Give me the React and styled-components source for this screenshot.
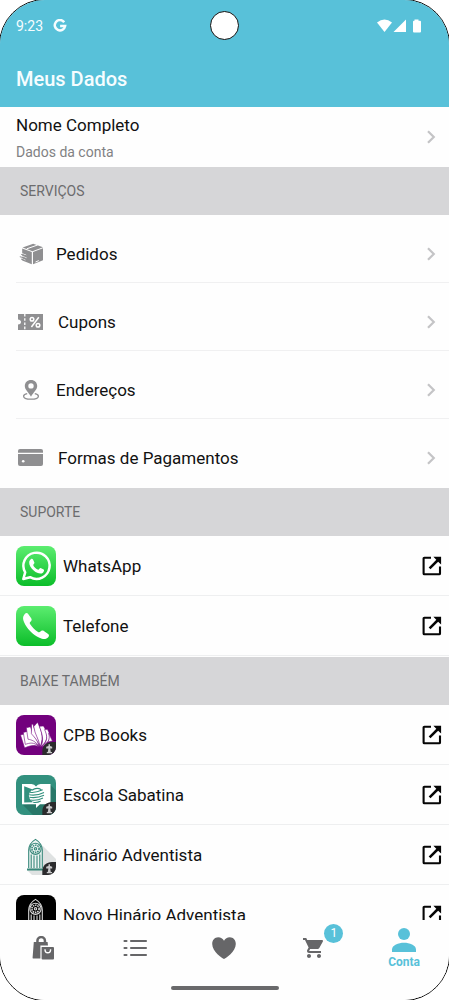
import React from "react";
import styled, { createGlobalStyle } from "styled-components";

const GlobalStyle = createGlobalStyle`
  * { box-sizing: border-box; }
  body {
    margin: 0;
    overflow: hidden;
    background: #fff;
    font-family: Roboto, "Noto Sans", sans-serif;
  }
  #root { display: flow-root; }
`;

const Phone = styled.div`
  display: flex;
  flex-direction: column;
  height: calc(100vh + 2px);
  margin: -1px;
  border: 1px solid #000;
  border-radius: 46px;
  overflow: hidden;
  background: #fefefe;
`;

const Header = styled.header`
  flex: none;
  background: #58c1d9;
  color: #f6fdff;
`;

const StatusBar = styled.div`
  display: grid;
  grid-template-columns: 1fr auto 1fr;
  align-items: center;
  height: 51px;
  padding: 0 28px 0 16px;
`;

const StatusLeft = styled.div`
  display: flex;
  align-items: center;
  gap: 10px;
  margin-right: -12px;
  font-size: 14px;
  line-height: 20px;
`;

const Camera = styled.div`
  width: 29px;
  height: 29px;
  margin-left: 12px;
  border: 1px solid #111;
  border-radius: 50%;
  background: #fff;
`;

const StatusRight = styled.div`
  display: flex;
  align-items: center;
  justify-content: flex-end;
`;

const Title = styled.h1`
  margin: 0;
  padding: 0 16px;
  font-size: 20px;
  font-weight: 500;
  line-height: 56px;
`;

const Content = styled.main`
  flex: 1;
  min-height: 0;
  overflow-y: auto;
  scrollbar-width: none;
`;

const SectionTitle = styled.h2`
  margin: 0;
  padding: 0 20px;
  background: #d6d6d8;
  color: #6c6c6e;
  font-size: 14px;
  font-weight: 400;
  line-height: 48px;
`;

const List = styled.ul`
  margin: 0;
  padding: 0 0 1px;
  list-style: none;
`;

const RowButton = styled.button`
  display: flex;
  align-items: center;
  width: 100%;
  height: ${(p) => (p.$tall ? 68 : 60)}px;
  padding: ${(p) => (p.$tall ? 9 : 0)}px 12px 0 16px;
  border: 0;
  background: none;
  color: #111;
  font: inherit;
  font-size: 17px;
  text-align: left;
  cursor: pointer;
`;

const ServiceItem = styled.li`
  position: relative;
  &:not(:last-child)::after {
    content: "";
    position: absolute;
    right: 0;
    bottom: 0;
    left: 16px;
    height: 1px;
    background: #f0f0f1;
  }
`;

const ServiceIcon = styled.span`
  display: flex;
  flex: none;
  width: ${(p) => p.$width}px;
  margin-right: 12px;
`;

const Label = styled.span`
  flex: 1;
`;

const AccountText = styled.span`
  display: flex;
  flex: 1;
  flex-direction: column;
  padding-top: 2px;
  line-height: 28px;
`;

const AccountHint = styled.small`
  color: #818183;
  font-size: 14px;
  line-height: 26px;
`;

const AppLink = styled.a`
  display: flex;
  align-items: center;
  gap: 7px;
  height: 60px;
  padding: 0 7px 0 16px;
  border-bottom: 1px solid #eeeff0;
  color: #111;
  font-size: 17px;
  text-decoration: none;
`;

const Footer = styled.footer`
  flex: none;
  height: 80px;
  background: #fefefe;
`;

const Tabs = styled.nav`
  display: grid;
  grid-template-columns: repeat(5, 1fr);
  height: 56px;
`;

const Tab = styled.button`
  display: flex;
  flex-direction: column;
  align-items: center;
  justify-content: center;
  gap: 2px;
  padding: ${(p) => (p.$active ? 2 : 0)}px 0 0;
  border: 0;
  background: none;
  color: ${(p) => (p.$active ? "#58c1d9" : "#666668")};
  font: inherit;
  font-size: 12px;
  font-weight: 700;
  line-height: 16px;
  cursor: pointer;
`;

const TabIcon = styled.span`
  position: relative;
  display: flex;
`;

const Badge = styled.span`
  position: absolute;
  top: -12px;
  right: -17px;
  width: 19px;
  height: 19px;
  border-radius: 50%;
  background: #58c1d9;
  color: #fff;
  font-size: 12px;
  font-weight: 400;
  line-height: 19px;
  text-align: center;
`;

const HomeBar = styled.div`
  width: 108px;
  height: 4px;
  margin: 10px auto 0;
  border-radius: 2px;
  background: #69696b;
`;

const Chevron = () => (
  <svg width="12" height="16" viewBox="0 0 12 16" fill="none" stroke="#c4c4c6" strokeWidth="2.2" aria-hidden="true">
    <path d="M3 2.2L8.8 8L3 13.8" />
  </svg>
);

const OpenIcon = () => (
  <svg width="20" height="20" viewBox="0 0 20 20" fill="none" stroke="#050505" strokeWidth="2.1" aria-hidden="true">
    <path d="M9 1.8H2.4Q1.6 1.8 1.6 2.6V17.4Q1.6 18.2 2.4 18.2H17.2Q18 18.2 18 17.4V10.5" />
    <path d="M7.6 12.4L17 3" strokeWidth="2.5" />
    <path d="M11.4 .8H19.1V8.6L16.7 6.2L13.8 3.3Z" fill="#050505" stroke="none" />
  </svg>
);

const BoxIcon = () => (
  <svg width="28" height="22" viewBox="0 0 28 22" fill="#8f8f91" aria-hidden="true">
    <path d="M6.6 4.4L17.2 .8L27 4.2L16.4 8.2Z" />
    <path d="M6.2 5.4L15.8 9V21.2L6.2 17.6Z" />
    <path d="M17 9L27 5.2V17.2L17 21.2Z" />
    <path d="M10.8 5.8L21.6 2M19.5 19L22.8 17.6" stroke="#fff" strokeWidth="1" />
    <path d="M5 10.2L10.2 12.1M5 12.8L10.6 14.9M5 15.4L9.4 17" stroke="#fff" strokeWidth=".8" />
    <path d="M5.2 11.4L10 12.7M3.8 13.7L10.4 15.5M5 16L8.8 17.4" stroke="#8f8f91" strokeWidth="1" />
  </svg>
);

const CouponIcon = () => (
  <svg width="30" height="18" viewBox="0 0 30 18" aria-hidden="true">
    <path fill="#8f8f91" d="M2 1H27V17H2V11.5Q5 11 5 9Q5 7 2 6.5Z" />
    <path d="M8.8 1V17" stroke="#fff" strokeWidth="1.3" strokeDasharray="2.6 1.6" />
    <g fill="none" stroke="#fff" strokeWidth="1.5">
      <circle cx="16" cy="6.2" r="1.8" />
      <circle cx="22" cy="12.2" r="1.8" />
      <path d="M22.8 4.2L15.4 14" />
    </g>
  </svg>
);

const PinIcon = () => (
  <svg width="28" height="22" viewBox="0 0 28 22" aria-hidden="true">
    <path fill="#8f8f91" fillRule="evenodd" d="M15 1C11.3 1 8.8 3.6 8.8 7C8.8 10.8 12.5 13.2 15 17.7C17.5 13.2 21.2 10.8 21.2 7C21.2 3.6 18.7 1 15 1ZM15 4.2A2.7 2.7 0 1 1 15 9.6A2.7 2.7 0 1 1 15 4.2Z" />
    <path d="M11.2 14.7C8.9 15.2 7.6 16 7.6 17.2C7.6 19 10.8 20.2 15 20.2S22.4 19 22.4 17.2C22.4 16 21.1 15.2 18.8 14.7" fill="none" stroke="#8f8f91" strokeWidth="1.3" />
  </svg>
);

const CardIcon = () => (
  <svg width="30" height="18" viewBox="0 0 30 18" fill="#8f8f91" aria-hidden="true">
    <path d="M4 0H25Q27 0 27 2V3.7H2V2Q2 0 4 0Z" />
    <path d="M2 5H27V15Q27 17 25 17H4Q2 17 2 15Z" />
    <circle cx="7.2" cy="12.3" r="1.3" fill="#fff" />
  </svg>
);

const Tile = ({ children, fill, id }) => (
  <svg width="40" height="40" viewBox="0 0 40 40" aria-hidden="true">
    <defs>
      <clipPath id={`${id}-clip`}><rect width="40" height="40" rx="8" /></clipPath>
      <linearGradient id={`${id}-green`} x1="0" y1="0" x2="0" y2="1">
        <stop stopColor="#5ced70" />
        <stop offset="1" stopColor="#0bbd29" />
      </linearGradient>
    </defs>
    <g clipPath={`url(#${id}-clip)`}>
      <rect width="40" height="40" fill={fill || `url(#${id}-green)`} />
      {children}
    </g>
  </svg>
);

const LeafMark = () => (
  <>
    <path fill="#2b2b2d" d="M26.3 40.5V36.5C26.3 30.5 30.5 27 36 27H40.5V31C40.5 37 36.5 40.5 31 40.5Z" />
    <path fill="#c9c9cb" d="M32.5 29.2H34V31L36.2 31.8V33.6H34.2L34.8 37H36V38.2H30.8V37H31.8L32.4 33.6H30.2V31.8L32.5 31Z" />
  </>
);

const WhatsAppTile = () => (
  <Tile id="whatsapp">
    <path fill="none" stroke="#fff" strokeWidth="2.5" strokeLinejoin="round" d="M7.3 33L9.2 26.4A13.1 13.1 0 1 1 14.1 31.2Z" />
    <path fill="#fff" d="M14.9 13.2C15.5 12.6 16.7 12.7 17 13.4L18.4 16.6C18.7 17.5 17.3 18.4 17.2 19C17.7 20.8 20.1 23.1 22.2 23.7C23 23.7 23.7 22 24.6 22L27.7 23.5C28.6 24 27.7 26.2 26.6 26.9C24.5 28.3 20.7 27 18 24.7C14.9 22.2 12.9 18.7 13.2 16C13.3 14.8 14 13.9 14.9 13.2Z" />
  </Tile>
);

const PhoneTile = () => (
  <Tile id="phone">
    <path fill="#fff" d="M8.4 8.4C9.7 6.9 11.1 6.5 12 7.7L15.2 12.2C16.3 13.8 15.4 15 14.2 16C13.5 16.7 13.7 17.5 14.4 18.5C16.3 21.3 18.8 23.8 21.7 25.7C22.7 26.4 23.5 26.5 24.2 25.8C25.3 24.6 26.4 24 27.9 25L32.1 28C33.5 29 33.2 30.3 31.7 31.7C29.6 33.6 27 33.5 23.4 31.8C16.7 28.6 11 22.8 8.1 16.2C6.7 13 6.6 10.5 8.4 8.4Z" />
  </Tile>
);

const BooksTile = () => (
  <Tile id="books" fill="#72007d">
    <g fill="#fff" stroke="#72007d" strokeWidth="0.6" strokeLinejoin="round">
      <path d="M4.5 20L8 19C10 23.5 18 26 23 32C18.5 29.3 13.5 30.7 8.6 33Z" />
      <path d="M7.3 17.4L11 16.4C13.5 22 20.5 25.5 23.2 32C18 26.5 13.5 28 9.3 29.4Z" />
      <path d="M10.3 12.7L14.5 11.8C16 19.5 22 24 23.4 32C19.5 26 15.5 24.8 12 24.2Z" />
      <path d="M15.5 9.4L17 9C18 15.5 23.5 20.5 23.7 32C21.5 24.5 17 21 15.4 18.6Z" />
      <path d="M17.8 11.6L21.5 7.2C24 13 29 21 24 32C23.2 24 18.6 19.6 17.8 11.6Z" />
      <path d="M23.4 11.3L27.5 10.9C32 18.5 33 25.5 24.5 32C28.8 25 25.5 17.6 23.4 11.3Z" />
      <path d="M28.6 14.6L31.4 14.3C36 21.5 34 27.5 25 32C32.6 26.8 31.3 20.5 28.6 14.6Z" />
      <path d="M32.7 18.3L36.5 26C33 26.2 28.5 28.5 25.4 32C32.6 28.6 34.2 24.6 32.7 18.3Z" />
    </g>
    <LeafMark />
  </Tile>
);

const SchoolTile = () => (
  <Tile id="school" fill="#32907e">
    <path fill="#287768" d="M34.5 10L40 15.5V40H17L7 30L20 28Z" />
    <path fill="#fff" d="M6 9H15.5Q18.5 9.2 20 11.4Q21.5 9.2 24.5 9H34.5V29.2H24L20 33V29.2H6Z" />
    <path fill="#32907e" d="M8.2 11.2L16.7 14.5V27.2L8.2 27.5Z" />
    <ellipse cx="20.7" cy="20.7" rx="7.8" ry="7" fill="#fff" />
    <g fill="none" stroke="#32907e" strokeWidth="1.1">
      <path d="M14 17.2Q19 18.2 26.7 14.8M13.2 19.8Q21 21 28 17.4M13.4 22.3Q21 23.5 28 20.2M14.7 25Q21 26 27 23M17.2 27.3Q21 28 24.7 26" />
      <path d="M16 15.3Q20.5 11.8 25.4 14.7" />
    </g>
    <LeafMark />
  </Tile>
);

const Window = ({ color }) => (
  <g fill="none" stroke={color} strokeWidth="1.1">
    <path d="M12.7 33V15Q13 8.3 19.5 4.4Q26 8.3 26.3 15V33" />
    <path d="M11 34.6H28" strokeWidth="2" />
    <circle cx="19.5" cy="13.8" r="5.6" />
    <circle cx="19.5" cy="13.8" r="3.6" strokeWidth="1.6" strokeDasharray="1.5 .8" />
    <circle cx="19.5" cy="13.8" r="1.2" />
    <path d="M15.2 19.5V33M18 20.5V33M21 20.5V33M23.8 19.5V33" />
  </g>
);

const HymnalTile = () => (
  <Tile id="hymnal" fill="#fefefe">
    <path fill="#dfe2e2" d="M26.5 10.5L40 24V40H16L11 35L20 30Z" />
    <path fill="#edf5f3" d="M12.7 33V14Q14 7 19.5 4.4Q25 7 26.3 14V33Z" />
    <Window color="#378779" />
    <LeafMark />
  </Tile>
);

const NewHymnalTile = () => (
  <Tile id="new-hymnal" fill="#000">
    <Window color="#dcdcdc" />
    <LeafMark />
  </Tile>
);

const BagsIcon = () => (
  <svg width="26" height="26" viewBox="0 0 26 26" aria-hidden="true">
    <path fill="#666668" d="M1.8 7H4.2V6C4.2 3 6.2 1 9.2 1S14.2 3 14.2 6V7H15.6L16 10.6H8.4V23.4H1.2Q.4 23.4 .6 22.4ZM6.7 7H11.7V6C11.7 4.2 10.8 3.2 9.2 3.2S6.7 4.2 6.7 6Z" fillRule="evenodd" />
    <path fill="#666668" d="M9.6 12H21Q22 12 22 13V23.6Q22 24.6 21 24.6H10.6Q9.6 24.6 9.6 23.6Z" />
    <path d="M13 14.2C13 19 18.6 19 18.6 14.2" fill="none" stroke="#fff" strokeWidth="1.4" />
  </svg>
);

const ListIcon = () => (
  <svg width="26" height="20" viewBox="0 0 26 20" fill="none" stroke="#666668" strokeWidth="2.1" strokeLinecap="round" aria-hidden="true">
    <path d="M2.5 3H4.5M9 3H24M2.5 10H4.5M9 10H24M2.5 17H4.5M9 17H24" />
  </svg>
);

const HeartIcon = () => (
  <svg width="26" height="24" viewBox="0 0 26 24" fill="#666668" aria-hidden="true">
    <path d="M13 23C11.5 22.4 1.2 15.5 1.2 7.9C1.2 4 3.8 1.2 7.2 1.2C9.8 1.2 11.8 2.5 13 4.7C14.2 2.5 16.2 1.2 18.8 1.2C22.2 1.2 24.8 4 24.8 7.9C24.8 15.5 14.5 22.4 13 23Z" />
  </svg>
);

const CartIcon = () => (
  <svg width="24" height="24" viewBox="0 0 24 24" fill="#666668" aria-hidden="true">
    <path d="M7 18c-1.1 0-1.99.9-1.99 2S5.9 22 7 22s2-.9 2-2-.9-2-2-2zM1 2v2h2l3.6 7.59-1.35 2.45c-.16.28-.25.61-.25.96 0 1.1.9 2 2 2h12v-2H7.42c-.14 0-.25-.11-.25-.25l.03-.12.9-1.63h7.45c.75 0 1.41-.41 1.75-1.03l3.58-6.49A1 1 0 0 0 20.01 4H5.21l-.94-2H1zm16 16c-1.1 0-1.99.9-1.99 2s.89 2 1.99 2 2-.9 2-2-.9-2-2-2z" />
  </svg>
);

const PersonIcon = () => (
  <svg width="26" height="24" viewBox="0 0 26 24" fill="#58c1d9" aria-hidden="true">
    <circle cx="13" cy="6" r="6" />
    <path d="M1 24V21.4C1 17 7.5 14.7 13 14.7S25 17 25 21.4V24Z" />
  </svg>
);

const services = [
  { name: "Pedidos", Icon: BoxIcon, width: 28 },
  { name: "Cupons", Icon: CouponIcon, width: 30 },
  { name: "Endereços", Icon: PinIcon, width: 28 },
  { name: "Formas de Pagamentos", Icon: CardIcon, width: 30 },
];

const support = [
  { name: "WhatsApp", Icon: WhatsAppTile },
  { name: "Telefone", Icon: PhoneTile },
];

const apps = [
  { name: "CPB Books", Icon: BooksTile },
  { name: "Escola Sabatina", Icon: SchoolTile },
  { name: "Hinário Adventista", Icon: HymnalTile },
  { name: "Novo Hinário Adventista", Icon: NewHymnalTile },
];

const LinkList = ({ items }) => (
  <List>
    {items.map(({ name, Icon }) => (
      <li key={name}>
        <AppLink href="#">
          <Icon />
          <Label>{name}</Label>
          <OpenIcon />
        </AppLink>
      </li>
    ))}
  </List>
);

export default function App() {
  return (
    <>
      <GlobalStyle />
      <Phone>
        <Header>
          <StatusBar>
            <StatusLeft>
              9:23
              <svg width="14" height="14" viewBox="0 0 14 14" fill="none" stroke="#f6fdff" strokeWidth="2.5" aria-hidden="true">
                <path d="M11.2 3.2A5.2 5.2 0 1 0 12.1 7.1H7.1" />
              </svg>
            </StatusLeft>
            <Camera />
            <StatusRight>
              <svg width="44" height="14" viewBox="0 0 44 14" fill="#fff" aria-hidden="true">
                <path d="M0 3.5Q7.5 -2.5 15 3.5L7.5 13Z" />
                <path d="M16.5 13L29 .5V13Z" />
                <path d="M37.5 .5H41.5V1.7H43Q44 1.7 44 2.7V12.5Q44 13.5 43 13.5H37Q36 13.5 36 12.5V2.7Q36 1.7 37 1.7H37.5Z" />
              </svg>
            </StatusRight>
          </StatusBar>
          <Title>Meus Dados</Title>
        </Header>
        <Content>
          <RowButton>
            <AccountText>
              Nome Completo
              <AccountHint>Dados da conta</AccountHint>
            </AccountText>
            <Chevron />
          </RowButton>
          <SectionTitle>SERVIÇOS</SectionTitle>
          <List>
            {services.map(({ name, Icon, width }) => (
              <ServiceItem key={name}>
                <RowButton $tall>
                  <ServiceIcon $width={width}><Icon /></ServiceIcon>
                  <Label>{name}</Label>
                  <Chevron />
                </RowButton>
              </ServiceItem>
            ))}
          </List>
          <SectionTitle>SUPORTE</SectionTitle>
          <LinkList items={support} />
          <SectionTitle>BAIXE TAMBÉM</SectionTitle>
          <LinkList items={apps} />
        </Content>
        <Footer>
          <Tabs>
            <Tab aria-label="Loja"><BagsIcon /></Tab>
            <Tab aria-label="Categorias"><ListIcon /></Tab>
            <Tab aria-label="Favoritos"><HeartIcon /></Tab>
            <Tab aria-label="Carrinho">
              <TabIcon>
                <CartIcon />
                <Badge>1</Badge>
              </TabIcon>
            </Tab>
            <Tab $active aria-current="page">
              <PersonIcon />
              Conta
            </Tab>
          </Tabs>
          <HomeBar />
        </Footer>
      </Phone>
    </>
  );
}
